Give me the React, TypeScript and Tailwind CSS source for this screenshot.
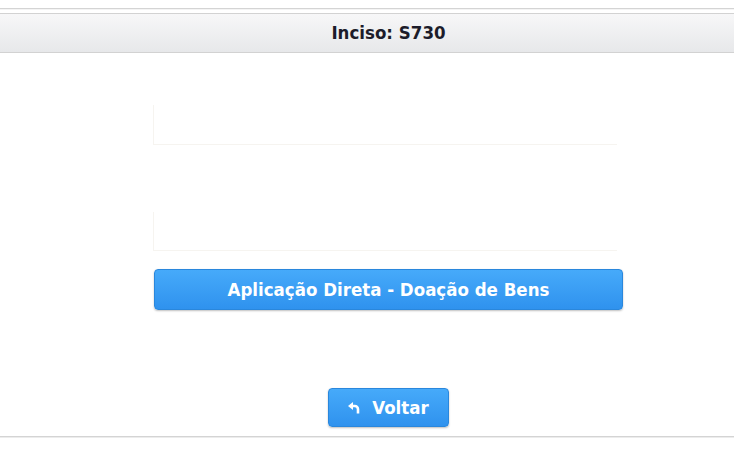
import { ReactNode } from 'react';

function ReplyIcon() {
  return (
    <svg viewBox="0 0 12 12" className="h-[12px] w-[12px]" fill="none">
      <path d="M0 4 L5 0 V8 Z" fill="white" />
      <path d="M4 4 H6.8 A3.2 3.2 0 0 1 10 7.2 V11.5" stroke="white" strokeWidth="2.6" />
    </svg>
  );
}

function BlueButton({ children, className }: { children: ReactNode; className?: string }) {
  return (
    <button
      type="button"
      className={`flex items-center justify-center rounded-[4px] border border-[#2a87dc] bg-gradient-to-b from-[#46aafa] to-[#2f92ee] font-bold text-white shadow-[0_1px_2px_rgba(0,0,0,0.25)] ${className ?? ''}`}
    >
      {children}
    </button>
  );
}

export default function App() {
  return (
    <div className="h-[467px] w-full overflow-hidden bg-white font-['DejaVu_Sans_Condensed','DejaVu_Sans',sans-serif]">
      <div className="w-[777px]">
        <div className="h-[8px]" />
        <div className="h-[2px] border-t border-[#d4d4d4] bg-[#f4f4f4]" />
        <div className="h-[3px]" />
        <div className="flex h-[40px] items-center justify-center border-y border-[#d2d2d2] bg-gradient-to-b from-[#f7f7f8] to-[#e7e8ea]">
          <span className="text-[18.5px] font-bold text-[#1c1c2a]">Inciso: S730</span>
        </div>

        <div className="flex flex-col items-center pt-[52px]">
          <div className="mr-[7px] h-[40px] w-[464px] border-b border-l border-[#f6f4f0]" />
          <div className="h-[67px]" />
          <div className="mr-[7px] h-[39px] w-[464px] border-b border-l border-[#f6f4f0]" />
          <div className="h-[18px]" />
          <BlueButton className="h-[41px] w-[469px] text-[18.5px]">Aplicação Direta - Doação de Bens</BlueButton>
          <div className="h-[78px]" />
          <BlueButton className="h-[39px] w-[121px] gap-[12px] text-[18.5px]">
            <ReplyIcon />
            Voltar
          </BlueButton>
        </div>
        <div className="mt-[9px] h-[2px] border-t border-[#d4d4d4] bg-[#ececec]" />
      </div>
    </div>
  );
}
